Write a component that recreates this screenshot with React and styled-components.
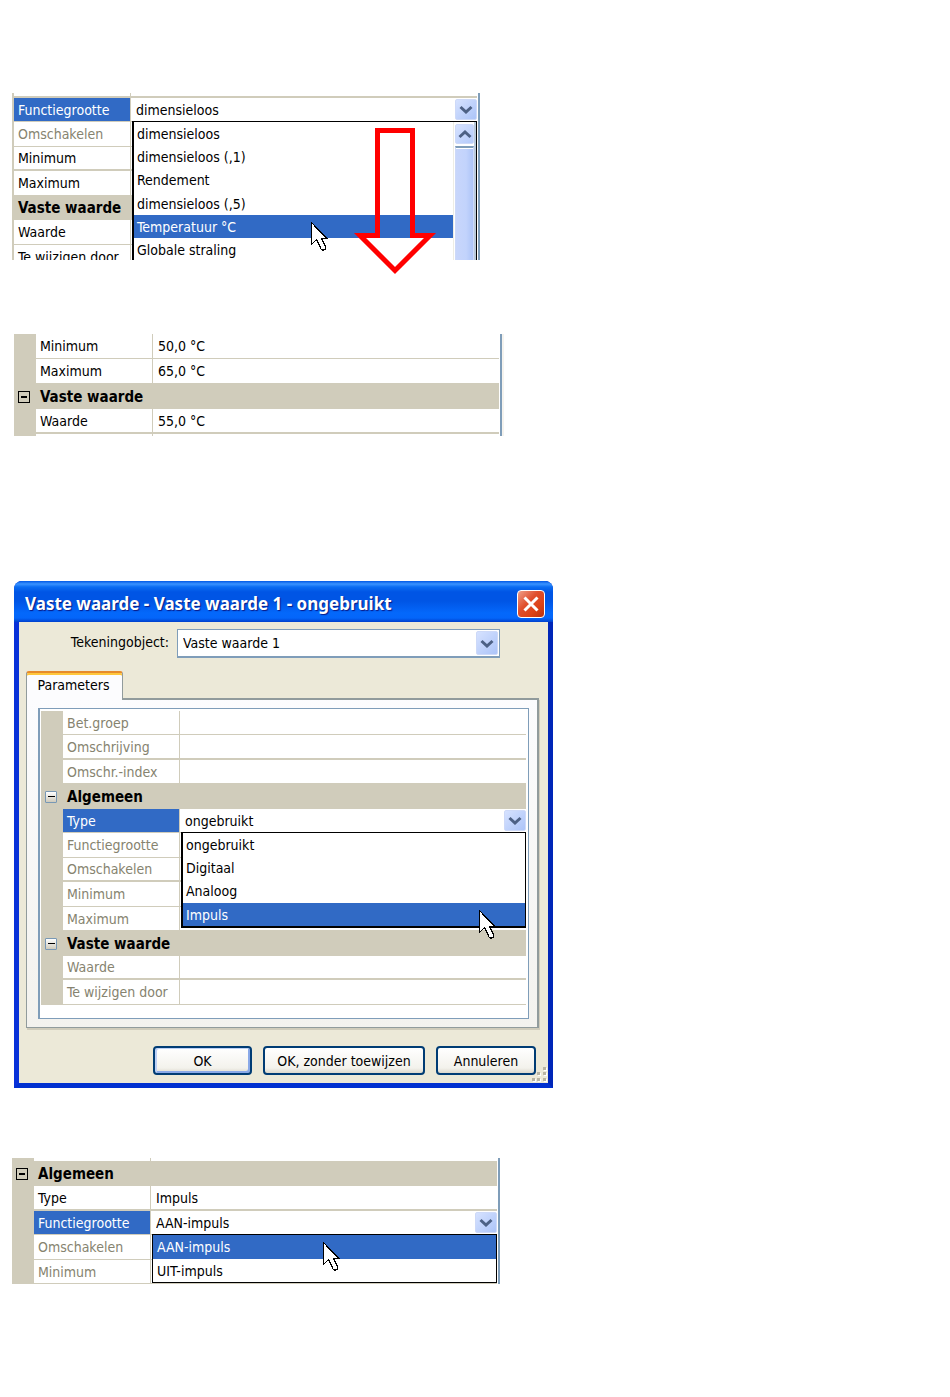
import React from 'react'
import styled, { createGlobalStyle, css } from 'styled-components'

const COLORS = {
  line: '#d0ccbb',
  face: '#ece9d8',
  frame: '#7f9db9',
  select: '#316ac5',
  disabled: '#86836f',
  arrow: '#4d6185',
}

const UNITS = ['dimensieloos', 'dimensieloos (,1)', 'Rendement', 'dimensieloos (,5)', 'Temperatuur °C', 'Globale straling']
const TYPES = ['ongebruikt', 'Digitaal', 'Analoog', 'Impuls']
const PULSES = ['AAN-impuls', 'UIT-impuls']

const unitRows = [
  { edge: 5, thick: true },
  { label: 'Functiegrootte', active: true, options: UNITS, picked: 4, scroll: true, cursor: 177 },
  { label: 'Omschakelen', disabled: true },
  { label: 'Minimum', thick: true },
  { label: 'Maximum' },
  { group: 'Vaste waarde' },
  { label: 'Waarde' },
  { label: 'Te wijzigen door', tall: true },
]

const rangeRows = [
  { label: 'Minimum', value: '50,0 °C', tall: true },
  { label: 'Maximum', value: '65,0 °C' },
  { group: 'Vaste waarde', tall: true },
  { label: 'Waarde', value: '55,0 °C', thick: true },
  { edge: 2, plain: true },
]

const dialogRows = [
  { label: 'Bet.groep', disabled: true },
  { label: 'Omschrijving', disabled: true, thick: true },
  { label: 'Omschr.-index', disabled: true },
  { group: 'Algemeen' },
  { label: 'Type', active: true, options: TYPES, picked: 3, cursor: 296 },
  { label: 'Functiegrootte', disabled: true },
  { label: 'Omschakelen', disabled: true, thick: true },
  { label: 'Minimum', disabled: true },
  { label: 'Maximum', disabled: true },
  { group: 'Vaste waarde' },
  { label: 'Waarde', disabled: true, thick: true },
  { label: 'Te wijzigen door', disabled: true },
]

const pulseRows = [
  { edge: 4 },
  { group: 'Algemeen' },
  { label: 'Type', value: 'Impuls', thick: true },
  { label: 'Functiegrootte', active: true, options: PULSES, picked: 0, cursor: 170 },
  { label: 'Omschakelen', disabled: true },
  { label: 'Minimum', disabled: true },
]

function Chevron({ up }) {
  return (
    <svg width="14" height="9" viewBox="0 0 14 9" aria-hidden="true">
      <path
        d={up ? 'M1.5 7 L7 2 L12.5 7' : 'M1.5 2 L7 7 L12.5 2'}
        fill="none"
        stroke={COLORS.arrow}
        strokeWidth="3"
      />
    </svg>
  )
}

function Pointer({ x }) {
  return (
    <PointerIcon $x={x} width="17" height="29" viewBox="0 0 17 29" aria-hidden="true">
      <path
        d="M0.5 0.5 V22.5 L5.5 17.5 L10 27 L12 28.5 L14.5 27 L14.5 25 L10.5 16.5 H16 Z"
        fill="#fff"
        stroke="#000"
        strokeWidth="1.3"
        shapeRendering="crispEdges"
      />
    </PointerIcon>
  )
}

function OptionList({ options, picked, scroll, cursor, label, frame }) {
  return (
    <Popup $frame={frame}>
      <Options role="listbox" aria-label={label}>
        {options.map((option, index) => (
          <Option
            key={option}
            role="option"
            aria-selected={index === picked}
            $picked={index === picked}
            $short={options.length < 3}
          >
            {option}
            {index === picked && <Pointer x={cursor} />}
          </Option>
        ))}
      </Options>
      {scroll && (
        <ScrollBar>
          <ScrollButton type="button" aria-label="Omhoog">
            <Chevron up />
          </ScrollButton>
          <Thumb />
        </ScrollBar>
      )}
    </Popup>
  )
}

function PropertyGrid({ rows, gutter = 22, soft, frame, name }) {
  // rows alternate between 24 and 25 pixels
  let count = 0

  return (
    <Table aria-label={name}>
      <colgroup>
        <Col $width={gutter} />
        <Col $width={117} />
        <col />
      </colgroup>
      <tbody>
        {rows.map((row, index) => {
          if (row.edge) {
            return (
              <tr key={index}>
                <Gutter $height={row.edge} />
                <Label as="td" $height={row.edge} $thick={row.thick} $bare={row.plain} />
                <Value $height={row.edge} $thick={row.thick} $bare={row.plain} />
              </tr>
            )
          }
          count += 1
          const height = row.tall || count % 2 === 0 ? 25 : 24

          if (row.group) {
            return (
              <tr key={index}>
                <Gutter $height={height}>
                  {gutter > 10 && (
                    <Expander type="button" $soft={soft} aria-label={`${row.group} inklappen`}>
                      <Dash $soft={soft} />
                    </Expander>
                  )}
                </Gutter>
                <Group colSpan={2} scope="colgroup">
                  {row.group}
                </Group>
              </tr>
            )
          }

          return (
            <tr key={index}>
              <Gutter $height={height} />
              <Label
                scope="row"
                $height={height}
                $thick={row.thick}
                $active={row.active}
                $disabled={row.disabled}
              >
                {row.label}
              </Label>
              <Value $height={height} $thick={row.thick}>
                {row.value}
                {row.options && (
                  <>
                    <CellSelect aria-label={row.label} defaultValue={row.options[0]}>
                      {row.options.map((option) => (
                        <option key={option}>{option}</option>
                      ))}
                    </CellSelect>
                    <DropMark>
                      <Chevron />
                    </DropMark>
                    <OptionList
                      label={row.label}
                      options={row.options}
                      picked={row.picked}
                      scroll={row.scroll}
                      cursor={row.cursor}
                      frame={frame}
                    />
                  </>
                )}
              </Value>
            </tr>
          )
        })}
      </tbody>
    </Table>
  )
}

function ValueDialog() {
  return (
    <Dialog role="dialog" aria-labelledby="dialog-title">
      <TitleBar>
        <Title id="dialog-title">Vaste waarde - Vaste waarde 1 - ongebruikt</Title>
        <CloseButton type="button" aria-label="Sluiten">
          <svg width="16" height="16" viewBox="0 0 16 16" aria-hidden="true">
            <path d="M1.5 1.5 L14.5 14.5 M14.5 1.5 L1.5 14.5" stroke="#fff" strokeWidth="3" />
          </svg>
        </CloseButton>
      </TitleBar>
      <DialogBody>
        <ObjectRow>
          <label htmlFor="object">Tekeningobject:</label>
          <ObjectBox>
            <ObjectSelect id="object" defaultValue="Vaste waarde 1">
              <option>Vaste waarde 1</option>
            </ObjectSelect>
            <DropMark $large>
              <Chevron />
            </DropMark>
          </ObjectBox>
        </ObjectRow>
        <Tabs role="tablist">
          <Tab type="button" role="tab" aria-selected="true">
            Parameters
          </Tab>
        </Tabs>
        <TabPage role="tabpanel">
          <GridBox>
            <PropertyGrid rows={dialogRows} soft frame="1px 1px 2px 2px" name="Parameters" />
          </GridBox>
        </TabPage>
        <Actions>
          <ActionButton type="button" $width={99} $primary>
            OK
          </ActionButton>
          <ActionButton type="button" $width={162}>
            OK, zonder toewijzen
          </ActionButton>
          <ActionButton type="button" $width={100}>
            Annuleren
          </ActionButton>
        </Actions>
        <Grip width="16" height="16" viewBox="0 0 16 16" aria-hidden="true">
          {[[11, 0], [5, 5], [11, 5], [0, 11], [5, 11], [11, 11]].map(([x, y]) => (
            <g key={`${x}-${y}`}>
              <rect x={x + 1} y={y + 1} width="3" height="3" fill="#fff" />
              <rect x={x} y={y} width="3" height="3" fill="#b8b4a3" />
            </g>
          ))}
        </Grip>
      </DialogBody>
    </Dialog>
  )
}

export default function App() {
  return (
    <>
      <GlobalStyle />
      <Main>
        <ArrowHost>
          <Panel $width={468} $height={167}>
            <PropertyGrid rows={unitRows} gutter={2} frame="1px 1px 1px 2px" name="Functiegrootte" />
          </Panel>
          <DownArrow width="84" height="148" viewBox="0 0 84 148" aria-hidden="true">
            <path
              d="M24.5 2.5 H59.5 V107.5 H77 L42 142.5 L7 107.5 H24.5 Z"
              fill="none"
              stroke="#f00"
              strokeWidth="5"
            />
          </DownArrow>
        </ArrowHost>
        <RangePanel $width={488}>
          <PropertyGrid rows={rangeRows} name="Bereik" />
        </RangePanel>
        <ValueDialog />
        <Panel $width={488}>
          <PropertyGrid rows={pulseRows} frame="1px" name="Algemeen" />
        </Panel>
      </Main>
    </>
  )
}

const GlobalStyle = createGlobalStyle`
  *, *::before, *::after {
    box-sizing: border-box;
  }

  body {
    margin: 0;
    background: #fff;
    color: #000;
    font-family: 'DejaVu Sans Condensed', 'DejaVu Sans', sans-serif;
    font-size: 14px;
    line-height: 20px;
  }

  button, select {
    margin: 0;
    padding: 0;
    font: inherit;
    color: inherit;
  }
`

const Main = styled.main`
  padding: 93px 12px 112px;
`

const ArrowHost = styled.div`
  position: relative;
  max-width: 468px;
`

const Panel = styled.section`
  max-width: ${({ $width }) => $width}px;
  height: ${({ $height }) => ($height ? `${$height}px` : 'auto')};
  overflow: ${({ $height }) => ($height ? 'hidden' : 'visible')};
  padding-right: 1px;
  border-right: 2px solid ${COLORS.frame};
`

const RangePanel = styled(Panel)`
  margin: 74px 0 145px 2px;
  box-shadow: 2px 0 0 #f5f3ee;
`

const DownArrow = styled.svg`
  position: absolute;
  z-index: 3;
  top: 35px;
  right: 43px;
`

const Table = styled.table`
  width: 100%;
  table-layout: fixed;
  border-collapse: separate;
  border-spacing: 0;
`

const Col = styled.col`
  width: ${({ $width }) => $width}px;
`

const Gutter = styled.td`
  height: ${({ $height }) => $height}px;
  padding: 0;
  background: ${COLORS.line};
  text-align: center;
  line-height: 0;
`

const cell = css`
  height: ${({ $height }) => $height}px;
  border-bottom: ${({ $thick, $bare }) => ($bare ? 0 : $thick ? 2 : 1)}px solid ${COLORS.line};
  line-height: ${({ $height }) => ($height < 10 ? 0 : 20)}px;
  white-space: nowrap;
`

const Label = styled.th`
  ${cell}
  padding: 0 0 0 4px;
  border-right: 1px solid ${COLORS.line};
  background: ${({ $active }) => ($active ? COLORS.select : '#fff')};
  color: ${({ $active, $disabled }) => ($active ? '#fff' : $disabled ? COLORS.disabled : '#000')};
  font-weight: normal;
  text-align: left;
`

const Value = styled.td`
  ${cell}
  position: relative;
  padding: 0 0 0 5px;
`

const Group = styled.th`
  padding: 0 0 0 4px;
  background: ${COLORS.line};
  font-size: 15px;
  text-align: left;
`

const Expander = styled.button`
  width: 12px;
  height: 12px;
  display: inline-grid;
  place-items: center;
  margin-right: 2px;
  border: 1px solid #000;
  background: ${COLORS.line};

  ${({ $soft }) =>
    $soft &&
    css`
      border-color: #7898b5;
      border-radius: 1px;
      background: linear-gradient(#fff, #cfcabb);
    `}
`

const Dash = styled.span`
  width: ${({ $soft }) => ($soft ? 7 : 6)}px;
  height: ${({ $soft }) => ($soft ? 1 : 2)}px;
  background: #000;
`

const CellSelect = styled.select`
  display: block;
  width: 100%;
  height: 22px;
  appearance: none;
  border: 0;
  background: #fff;
  outline: none;
`

const DropMark = styled.span`
  position: absolute;
  top: 1px;
  right: ${({ $large }) => ($large ? 1 : 0)}px;
  width: 22px;
  height: ${({ $large }) => ($large ? 24 : 21)}px;
  display: grid;
  place-items: center;
  border: 1px solid #cdd9f8;
  border-radius: 2px;
  background: linear-gradient(135deg, #d6e2ff, #acc4f8);
  pointer-events: none;
`

const Popup = styled.div`
  position: absolute;
  z-index: 1;
  top: 100%;
  left: 1px;
  right: 0;
  display: flex;
  border: solid #000;
  border-width: ${({ $frame }) => $frame};
  background: #fff;
`

const Options = styled.ul`
  flex: 1;
  margin: 0;
  padding: 0;
  list-style: none;
`

const Option = styled.li`
  position: relative;
  height: 23px;
  padding-left: 3px;
  line-height: 25px;
  background: ${({ $picked }) => ($picked ? COLORS.select : '#fff')};
  color: ${({ $picked }) => ($picked ? '#fff' : '#000')};

  &:nth-child(3n) {
    height: 24px;
  }

  ${({ $short }) =>
    $short &&
    css`
      padding-left: 4px;

      &:first-child {
        height: 24px;
      }
    `}
`

const PointerIcon = styled.svg`
  position: absolute;
  z-index: 2;
  top: 7px;
  left: ${({ $x }) => $x}px;
`

const ScrollBar = styled.div`
  width: 23px;
  display: flex;
  flex-direction: column;
  gap: 2px;
  padding: 2px 2px 0 1px;
  border-left: 1px solid #eeede5;
  background: linear-gradient(90deg, #fff 20px, #b9c9da 20px);
`

const ScrollButton = styled.button`
  height: 20px;
  display: grid;
  place-items: center;
  border: 1px solid #cdd9f8;
  border-radius: 2px;
  background: linear-gradient(135deg, #d6e2ff, #b4cafa);
`

const Thumb = styled.div`
  flex: 1;
  border: 1px solid #cdd9f8;
  border-top: 2px solid ${COLORS.frame};
  background: linear-gradient(90deg, #c8d6fb, #c2d3fc 60%, #adc4f7);
  box-shadow: inset 0 1px 0 #fff;
`

const Dialog = styled.section`
  max-width: 539px;
  margin: 0 0 70px 2px;
  border: solid #0a3fdc;
  border-width: 0 5px 5px;
  border-color: #0a3fdc #0026b8 #0030d0 #0831d9;
  border-radius: 8px 8px 0 0;
  background: #0054e3;
`

const TitleBar = styled.header`
  height: 41px;
  display: flex;
  align-items: center;
  justify-content: space-between;
  margin: 0 -5px;
  padding: 4px 8px 0 11px;
  border-radius: 8px 8px 0 0;
  background: linear-gradient(
    #0058e6 0,
    #3a93ff 3px,
    #0a6cf2 6px,
    #0055e5 11px,
    #0055e5 20px,
    #0468fb 32px,
    #0466fa 37px,
    #0040cc 41px
  );
`

const Title = styled.h1`
  margin: 0;
  color: #fff;
  font-family: 'Noto Sans', sans-serif;
  font-size: 17px;
  line-height: 24px;
  text-shadow: 1px 1px 1px #0a1883;
  white-space: nowrap;
`

const CloseButton = styled.button`
  width: 28px;
  height: 28px;
  display: grid;
  place-items: center;
  border: 1px solid #fff;
  border-radius: 4px;
  background: linear-gradient(135deg, #f0a08a, #e0502e 40%, #dd4317 70%, #b83210);
`

const DialogBody = styled.div`
  position: relative;
  padding: 7px 9px 8px 7px;
  background: ${COLORS.face};
`

const ObjectRow = styled.div`
  display: flex;
  gap: 8px;
  padding: 2px 39px 0 0;
  margin-top: -2px;

  label {
    width: 143px;
    padding-top: 3px;
    text-align: right;
  }
`

const ObjectBox = styled.div`
  position: relative;
  flex: 1;
  padding: 1px;
  border: 1px solid ${COLORS.frame};
  border-bottom-width: 2px;
  background: #fff;
`

const ObjectSelect = styled.select`
  display: block;
  width: 100%;
  height: 24px;
  padding-left: 4px;
  appearance: none;
  border: 0;
  background: #fff;
  outline: none;
`

const Tabs = styled.div`
  display: flex;
  margin-top: 13px;
`

const Tab = styled.button`
  position: relative;
  width: 97px;
  height: 29px;
  margin-bottom: -2px;
  padding: 0 2px 4px 0;
  border: 1px solid #919b9c;
  border-top: 2px solid #e68b2c;
  border-bottom: 0;
  border-radius: 3px 3px 0 0;
  background: #fcfcfe;
  box-shadow: inset 0 2px 0 #ffc73c;
`

const TabPage = styled.div`
  padding: 8px 8px 8px 11px;
  border: 1px solid #919b9c;
  border-width: 2px 2px 1px 1px;
  background: linear-gradient(#fcfcfe, #f3f2ee);
  box-shadow: 1px 2px 0 #d0ccbb;
`

const GridBox = styled.div`
  padding: 2px 2px 13px 1px;
  border: 1px solid ${COLORS.frame};
  border-left-width: 2px;
  background: #fff;
`

const Actions = styled.div`
  display: flex;
  justify-content: flex-end;
  gap: 11px;
  margin-top: 18px;
  padding-right: 3px;
`

const ActionButton = styled.button`
  width: ${({ $width }) => $width}px;
  height: 29px;
  border: 2px solid #003c74;
  border-radius: 4px;
  background: linear-gradient(#fff, #f3f2ec 80%, #dcd8cc);
  white-space: nowrap;
  ${({ $primary }) => $primary && 'box-shadow: inset 2px 1px 0 #bcd0f5, inset -2px -2px 0 #8aa9e8;'}
`

const Grip = styled.svg`
  position: absolute;
  right: 0;
  bottom: 0;
`
